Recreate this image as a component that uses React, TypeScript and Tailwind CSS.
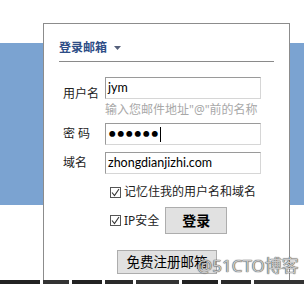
import React from "react";

const font = { fontFamily: '"Noto Sans", "Noto Sans CJK SC", sans-serif' };
const latin = { fontFamily: 'Lato, "Noto Sans CJK SC", sans-serif' };

function Check() {
  return (
    <span className="flex h-[11px] w-[11px] items-center justify-center border border-[#555] bg-white">
      <svg width="9" height="9" viewBox="0 0 9 9">
        <path d="M1 4.5 L3.5 7.5 L8 1" fill="none" stroke="#333" strokeWidth="1.1" />
      </svg>
    </span>
  );
}

const inputCls =
  "flex h-[22px] w-[156px] items-center border border-t-[#9a9a9a] border-l-[#9a9a9a] border-r-[#d6d6d6] border-b-[#d6d6d6] bg-white pl-[2px] text-[12.5px] text-black";

export default function App() {
  return (
    <div
      className="relative h-[284px] w-[304px] overflow-hidden bg-[linear-gradient(to_bottom,#ffffff_0px,#ffffff_43px,#7ba3d1_43px,#7ba3d1_205px,#ffffff_205px)]"
      style={font}
    >
      <div className="pt-[23px]">
        <div className="ml-[43px] h-[257px] w-[247px] border border-b-0 border-[#8c8c8c] bg-white">
          <div className="mx-[15px] flex h-[38px] items-start border-b border-[#8a8a8a] pt-[17px]">
            <span className="text-[12px] font-bold leading-[14px] text-[#2d4d86]">登录邮箱</span>
            <svg className="ml-[7px] mt-[5px]" width="7" height="4" viewBox="0 0 7 4">
              <path d="M0 0 H7 L3.5 4 Z" fill="#55607a" />
            </svg>
          </div>

          <div className="mt-[15px] flex pl-[19px]">
            <span className="mt-[10px] w-[42px] text-[12px] leading-[14px] text-[#222]">用户名</span>
            <div className={inputCls} style={latin}>jym</div>
          </div>
          <div className="mt-[2px] pl-[61px] text-[12px] leading-[14px] text-[#a8a8a8]">
            输入您邮件地址"@"前的名称
          </div>

          <div className="mt-[6px] flex items-center pl-[19px]">
            <span className="w-[42px] text-[12px] leading-[14px] text-[#222]">密 码</span>
            <div className={inputCls}>
              <span className="pl-[1px] text-[6.5px] tracking-[2px]">●●●●●●</span>
              <span className="h-[15px] w-[1px] bg-black" />
            </div>
          </div>

          <div className="mt-[7px] flex items-center pl-[19px]">
            <span className="w-[42px] text-[12px] leading-[14px] text-[#222]">域名</span>
            <div className={inputCls} style={latin}>zhongdianjizhi.com</div>
          </div>

          <div className="mt-[11px] flex h-[14px] items-center pl-[66px]">
            <Check />
            <span className="ml-[3px] text-[12px] leading-[14px] text-[#222]">记忆住我的用户名和域名</span>
          </div>

          <div className="mt-[8px] flex h-[27px] items-center pl-[66px]">
            <Check />
            <span className="ml-[3px] text-[12px] leading-[14px] text-[#222]">IP安全</span>
            <button className="ml-[6px] flex h-[27px] w-[62px] items-center justify-center border border-[#adadad] bg-[#e1e1e1] text-[14px] font-bold text-black">
              登录
            </button>
          </div>

          <div className="mt-[16px] pl-[73px]">
            <button className="flex h-[24px] w-[100px] items-center justify-center border border-[#adadad] bg-[#e1e1e1] text-[13.5px] text-black">
              免费注册邮箱
            </button>
          </div>
        </div>
        <div className="flex h-[4px] gap-[3px] overflow-hidden">
          <span className="w-[40px] bg-[#222]" />
          <span className="w-[26px] bg-[#333]" />
          <span className="w-[30px] bg-[#222]" />
          <span className="w-[28px] bg-[#2a2a2a]" />
          <span className="w-[44px] bg-[#333]" />
          <span className="w-[36px] bg-[#222]" />
          <span className="w-[30px] bg-[#2a2a2a]" />
          <span className="w-[50px] bg-[#333]" />
        </div>
      </div>

      <div className="absolute left-[197px] top-[256px] text-[17px] leading-[20px] text-[#c8c8c8] [text-shadow:0_0_1px_#444,0_0_1px_#444]">
        @51CTO博客
      </div>
    </div>
  );
}
